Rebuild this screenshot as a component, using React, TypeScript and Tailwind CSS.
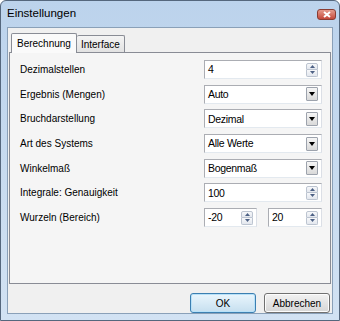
import React from 'react';

const Arrow = ({ dir }: { dir: 'up' | 'down' }) => (
  <svg width="5" height="3" viewBox="0 0 5 3">
    {dir === 'up' ? <path d="M2.5 0L5 3H0Z" fill="#4d6185" /> : <path d="M0 0H5L2.5 3Z" fill="#4d6185" />}
  </svg>
);

const Spinner = ({ value, className = '' }: { value: string; className?: string }) => (
  <div className={`h-[19px] flex items-center bg-white border border-[#abadb3] border-r-[#dbdfe6] border-b-[#e3e9ef] ${className}`}>
    <span className="flex-1 pl-[3px] text-[10.5px] tracking-[-0.3px] text-black leading-none">{value}</span>
    <div className="flex flex-col mr-[3px]">
      <div className="w-[12px] h-[7px] flex items-center justify-center rounded-t-[2px] border border-[#bcc4d0] bg-gradient-to-b from-[#f7f8fa] to-[#e3e7ee]">
        <Arrow dir="up" />
      </div>
      <div className="w-[12px] h-[7px] flex items-center justify-center rounded-b-[2px] border border-t-0 border-[#bcc4d0] bg-gradient-to-b from-[#f7f8fa] to-[#e3e7ee]">
        <Arrow dir="down" />
      </div>
    </div>
  </div>
);

const Select = ({ value }: { value: string }) => (
  <div className="h-[19px] w-[118px] flex items-center bg-white border border-[#abadb3] border-r-[#dbdfe6] border-b-[#e3e9ef]">
    <span className="flex-1 pl-[3px] text-[10.5px] tracking-[-0.3px] text-black leading-none">{value}</span>
    <div className="w-[12px] h-[14px] mr-[3px] flex items-center justify-center rounded-[1px] border border-[#9da3ad] bg-gradient-to-b from-[#f6f6f6] to-[#d9d9d9]">
      <svg width="6" height="4" viewBox="0 0 6 4">
        <path d="M0 0H6L3 4Z" fill="#000" />
      </svg>
    </div>
  </div>
);

const rows: { label: string; control: React.ReactNode }[] = [
  { label: 'Dezimalstellen', control: <Spinner value="4" className="w-[118px]" /> },
  { label: 'Ergebnis (Mengen)', control: <Select value="Auto" /> },
  { label: 'Bruchdarstellung', control: <Select value="Dezimal" /> },
  { label: 'Art des Systems', control: <Select value="Alle Werte" /> },
  { label: 'Winkelmaß', control: <Select value="Bogenmaß" /> },
  { label: 'Integrale: Genauigkeit', control: <Spinner value="100" className="w-[118px]" /> },
  {
    label: 'Wurzeln (Bereich)',
    control: (
      <div className="flex gap-[11px] w-[118px]">
        <Spinner value="-20" className="w-[53px]" />
        <Spinner value="20" className="w-[54px]" />
      </div>
    ),
  },
];

export default function App() {
  return (
    <div className="font-['Liberation_Sans',Arial,sans-serif] w-[340px] h-[321px] flex flex-col bg-gradient-to-b from-[#bcd3ec] to-[#d2e2f3] border border-[#55677d] rounded-t-[6px] overflow-hidden">
      <div className="h-[26px] flex items-center justify-between pl-[6px] pr-[3px] shrink-0">
        <span className="text-[11.5px] text-black">Einstellungen</span>
        <div className="w-[19px] h-[11px] mt-[1px] flex items-center justify-center rounded-[3px] border border-[#8a3c32] bg-gradient-to-b from-[#e49a8c] to-[#c4473a]">
          <svg width="8" height="7" viewBox="0 0 8 7">
            <path d="M1 1L7 6M7 1L1 6" stroke="#fff" strokeWidth="2" />
          </svg>
        </div>
      </div>
      <div className="flex-1 mx-[6px] mb-[6px] border border-[#8aa0b8] bg-[#f0f0f0] flex flex-col">
        <div className="flex items-end pl-[3px] pt-[4px] h-[24px] shrink-0">
          <div className="h-[20px] px-[5px] flex items-center bg-[#fafafa] border border-[#898c95] border-b-0 rounded-t-[2px] text-[10px] text-black relative top-[1px] z-10">
            Berechnung
          </div>
          <div className="h-[17px] px-[4px] flex items-center bg-gradient-to-b from-[#f4f4f4] to-[#e2e2e2] border border-[#898c95] border-b-0 border-l-0 rounded-t-[2px] text-[10px] text-black">
            Interface
          </div>
        </div>
        <div className="mx-[1px] h-[232px] border border-[#898c95] bg-[#f5f5f5] pt-[7px] pl-[10px] pr-[8px] flex flex-col gap-[5.7px]">
          {rows.map((r) => (
            <div key={r.label} className="flex items-center justify-between h-[19px]">
              <span className="text-[10px] text-black">{r.label}</span>
              {r.control}
            </div>
          ))}
        </div>
        <div className="flex justify-end gap-[8px] pr-[2px] pt-[9px]">
          <button className="w-[66px] h-[20px] rounded-[3px] border border-[#3c7fb1] bg-gradient-to-b from-[#eaf6fd] to-[#c6dfef] text-[10px] text-black shadow-[inset_0_0_0_1px_#b8e1f8]">
            OK
          </button>
          <button className="w-[66px] h-[20px] rounded-[3px] border border-[#707070] bg-gradient-to-b from-[#f2f2f2] to-[#d6d6d6] text-[10px] text-black shadow-[inset_0_0_0_1px_#fcfcfc]">
            Abbrechen
          </button>
        </div>
      </div>
    </div>
  );
}
